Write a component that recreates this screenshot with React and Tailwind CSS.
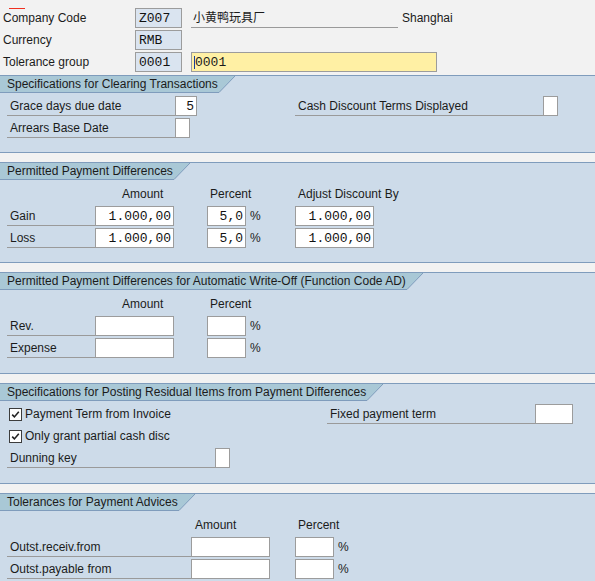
const sans = { fontFamily: '"Liberation Sans", "Noto Sans CJK SC", Arial, sans-serif' }

// a text field, white by default, right-aligned numbers in a fixed-width font
function Field({ w, value = '', tone = 'white', align = 'right' }) {
  const bg = tone === 'display' ? 'bg-[#dae4f0]' : 'bg-white'
  return (
    <div
      className={`${w} h-[20px] shrink-0 border border-[#9c9c9c] ${bg} flex items-center ${align === 'right' ? 'justify-end pr-[2px]' : 'justify-start pl-[3px]'} font-['Liberation_Mono',monospace] text-[13px] leading-none text-[#111]`}
    >
      {value}
    </div>
  )
}

function Label({ w, children }) {
  return (
    <div className={`${w} h-full shrink-0 border-b border-[#9a9a9a] pl-[3px] flex items-center`}>
      {children}
    </div>
  )
}

function Check() {
  return (
    <span className="w-[13px] h-[13px] shrink-0 border border-[#3c3c3c] bg-white flex items-center justify-center">
      <svg width="9" height="9" viewBox="0 0 9 9">
        <polyline points="1.2,4.6 3.4,6.9 7.8,1.8" fill="none" stroke="#222" strokeWidth="1.6" />
      </svg>
    </span>
  )
}

function Section({ title, children, pb = 'pb-[14px]' }) {
  return (
    <div className={`border-y border-[#7f9cbc] bg-[#cddbe9] ${pb}`}>
      <div className="flex h-[17px]">
        <div className="flex items-center border-b border-[#7f9cbc] bg-[#a9c8d6] pl-[7px] pr-[1px] leading-none whitespace-nowrap">
          {title}
        </div>
        <svg width="16" height="17" viewBox="0 0 16 17" className="block">
          <polygon points="0,0 16,0 0,16.5" fill="#a9c8d6" />
          <line x1="16" y1="0" x2="0" y2="16.5" stroke="#7f9cbc" strokeWidth="1" />
        </svg>
      </div>
      <div className="flex flex-col gap-[2px] pt-[3px]">{children}</div>
    </div>
  )
}

const Row = ({ children, className = '' }) => (
  <div className={`flex h-[20px] items-center ${className}`}>{children}</div>
)

const Pct = () => <span className="w-[49px] shrink-0 pl-[4px]">%</span>

export default function App() {
  return (
    <div style={sans} className="w-full min-h-[581px] bg-[#f2f2f2] text-[12px] text-[#1b1b1b] overflow-hidden">
      {/* header fields */}
      <div className="flex flex-col gap-[2px] pt-[8px] pb-[3px]">
        <Row>
          <div className="relative w-[135px] shrink-0 pl-[3px]">
            Company Code
            {/* required-entry marker */}
            <span className="absolute left-[9px] -top-[1px] w-[16px] h-px bg-[#f03020]" />
          </div>
          <Field w="w-[47px]" value="Z007" tone="display" align="left" />
          <div className="w-[9px] shrink-0" />
          <div className="w-[207px] h-full shrink-0 border-b border-[#9a9a9a] pl-[2px] flex items-center">小黄鸭玩具厂</div>
          <span className="pl-[4px]">Shanghai</span>
        </Row>
        <Row>
          <div className="w-[135px] shrink-0 pl-[3px]">Currency</div>
          <Field w="w-[47px]" value="RMB" tone="display" align="left" />
        </Row>
        <Row>
          <div className="w-[135px] shrink-0 pl-[3px]">Tolerance group</div>
          <Field w="w-[47px]" value="0001" tone="display" align="left" />
          <div className="w-[9px] shrink-0" />
          <div className="relative w-[246px] h-[20px] shrink-0 border border-[#9c9c9c] bg-[#fff0a4] pl-[3px] flex items-center font-['Liberation_Mono',monospace] text-[13px] leading-none">
            0001
            <span className="absolute left-[2px] top-[3px] w-px h-[13px] bg-[#1a3d9c]" />
          </div>
        </Row>
      </div>

      <div className="flex flex-col gap-[9px]">
        <Section title="Specifications for Clearing Transactions">
          <Row className="pl-[7px]">
            <Label w="w-[168px]">Grace days due date</Label>
            <Field w="w-[22px]" value="5" />
            <div className="w-[98px] shrink-0" />
            <Label w="w-[248px]">Cash Discount Terms Displayed</Label>
            <Field w="w-[15px]" />
          </Row>
          <Row className="pl-[7px]">
            <Label w="w-[168px]">Arrears Base Date</Label>
            <Field w="w-[15px]" />
          </Row>
        </Section>

        <Section title="Permitted Payment Differences">
          <div className="flex h-[21px] items-center">
            <span className="w-[122px] shrink-0" />
            <span className="w-[88px] shrink-0">Amount</span>
            <span className="w-[88px] shrink-0">Percent</span>
            <span>Adjust Discount By</span>
          </div>
          {['Gain', 'Loss'].map((name) => (
            <Row key={name} className="pl-[7px]">
              <Label w="w-[88px]">{name}</Label>
              <Field w="w-[79px]" value="1.000,00" />
              <div className="w-[33px] shrink-0" />
              <Field w="w-[39px]" value="5,0" />
              <Pct />
              <Field w="w-[79px]" value="1.000,00" />
            </Row>
          ))}
        </Section>

        <Section title="Permitted Payment Differences for Automatic Write-Off (Function Code AD)" pb="pb-[15px]">
          <div className="flex h-[21px] items-center">
            <span className="w-[122px] shrink-0" />
            <span className="w-[88px] shrink-0">Amount</span>
            <span>Percent</span>
          </div>
          {['Rev.', 'Expense'].map((name) => (
            <Row key={name} className="pl-[7px]">
              <Label w="w-[88px]">{name}</Label>
              <Field w="w-[79px]" />
              <div className="w-[33px] shrink-0" />
              <Field w="w-[39px]" />
              <Pct />
            </Row>
          ))}
        </Section>

        <Section title="Specifications for Posting Residual Items from Payment Differences" pb="pb-[15px]">
          <Row>
            <div className="w-[327px] shrink-0 pl-[9px] flex items-center gap-[3px]">
              <Check />
              <span>Payment Term from Invoice</span>
            </div>
            <Label w="w-[208px]">Fixed payment term</Label>
            <Field w="w-[38px]" />
          </Row>
          <Row>
            <div className="pl-[9px] flex items-center gap-[3px]">
              <Check />
              <span>Only grant partial cash disc</span>
            </div>
          </Row>
          <Row className="pl-[7px]">
            <Label w="w-[208px]">Dunning key</Label>
            <Field w="w-[15px]" />
          </Row>
        </Section>

        <Section title="Tolerances for Payment Advices">
          <div className="flex h-[21px] items-center">
            <span className="w-[195px] shrink-0" />
            <span className="w-[103px] shrink-0">Amount</span>
            <span>Percent</span>
          </div>
          {['Outst.receiv.from', 'Outst.payable from'].map((name) => (
            <Row key={name} className="pl-[7px]">
              <Label w="w-[184px]">{name}</Label>
              <Field w="w-[79px]" />
              <div className="w-[25px] shrink-0" />
              <Field w="w-[39px]" />
              <span className="pl-[4px]">%</span>
            </Row>
          ))}
        </Section>
      </div>
    </div>
  )
}
